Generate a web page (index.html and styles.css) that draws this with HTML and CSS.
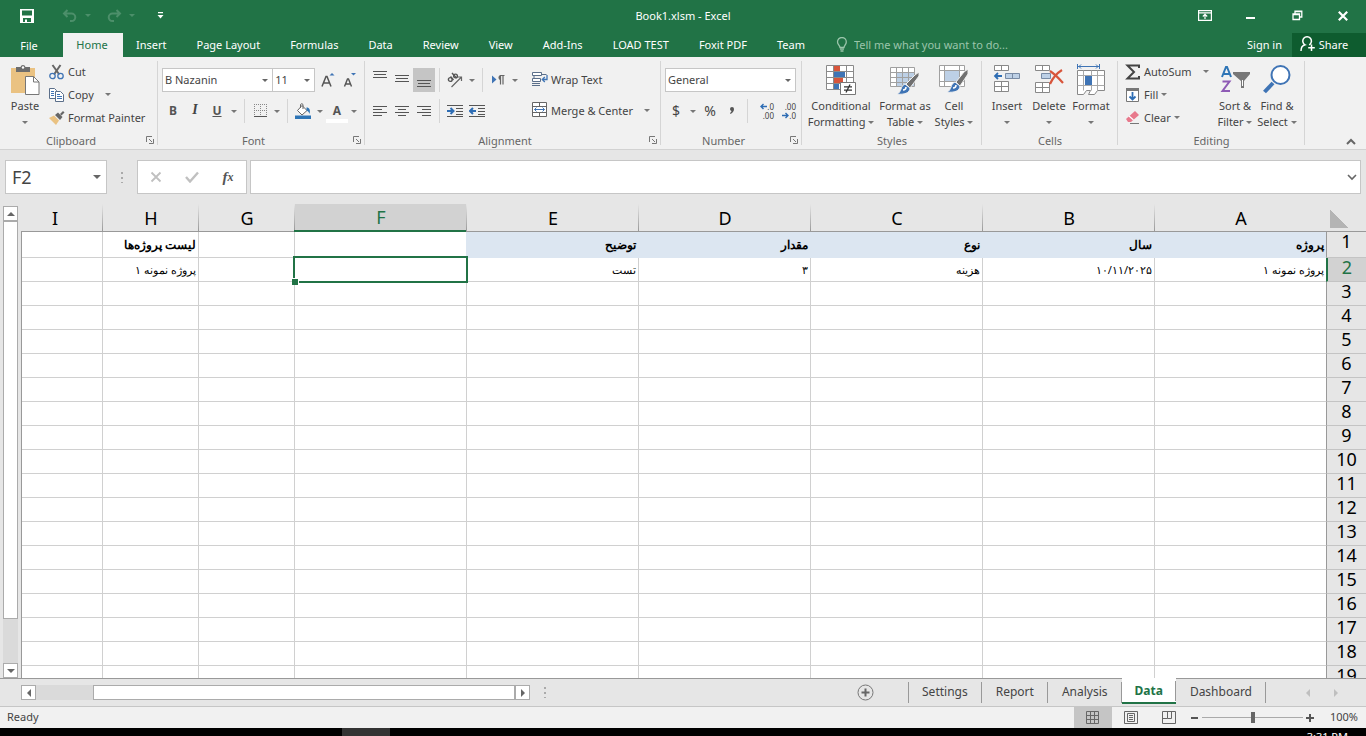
FILE: index.html
```
<!DOCTYPE html>
<html lang="en">
<head>
    <meta charset="UTF-8">
    <meta name="viewport" content="width=device-width, initial-scale=1.0">
    <title>Book1.xlsm - Excel</title>
    <link rel="stylesheet" href="styles.css">
</head>
<body>
    <header class="titlebar">
        <div class="quick-access">
            <button class="qa-save" aria-label="Save"><svg width="14" height="14" viewBox="0 0 14 14"><path d="M0 0h14v14H0z M2 1.500v5h10v-5z M3 9v4h2v-2.500h2V13h4V9z" fill="#fff" fill-rule="evenodd"/></svg></button>
            <button class="qa-undo dim" aria-label="Undo"><svg width="16" height="14" viewBox="0 0 16 14"><path d="M5.500 1L2 4.500L5.500 8M2 4.500h7.500a3.800 3.800 0 0 1 0 7.600H8" fill="none" stroke="currentColor" stroke-width="2"/></svg></button>
            <button class="caret-btn dim" aria-label="Undo list"><span class="caret"></span></button>
            <button class="qa-redo dim" aria-label="Redo"><svg width="16" height="14" viewBox="0 0 16 14"><path d="M10.500 1L14 4.500L10.500 8M14 4.500H6.500a3.800 3.800 0 0 0 0 7.600H8" fill="none" stroke="currentColor" stroke-width="2"/></svg></button>
            <button class="caret-btn dim" aria-label="Redo list"><span class="caret"></span></button>
            <button class="qa-more" aria-label="Customize Quick Access Toolbar"><svg width="7" height="7" viewBox="0 0 7 7"><path d="M1 0h5v1.300H1zM.5 3h6L3.500 6.500z" fill="#fff"/></svg></button>
        </div>
        <h1>Book1.xlsm - Excel</h1>
        <div class="window-buttons">
            <button aria-label="Ribbon Display Options"><svg width="14" height="11" viewBox="0 0 14 11"><path d="M.6.6h12.800v9.800H.6zM.6 2.800h12.800M7 9V5M4.800 6.500L7 4.400l2.200 2.100" fill="none" stroke="#fff" stroke-width="1.200"/></svg></button>
            <button aria-label="Minimize"><svg width="10" height="10"><path d="M0 6h9v2H0z" fill="#fff"/></svg></button>
            <button aria-label="Restore"><svg width="11" height="11" viewBox="0 0 11 11"><path d="M1 4h6.500v5.500H1zM1 4.500h6.500M3 4V1.200h6.800V7H7.500M3 1.500h6.800" fill="none" stroke="#fff" stroke-width="1.300"/></svg></button>
            <button aria-label="Close"><svg width="10" height="10" viewBox="0 0 10 10"><path d="M.8.8l8.400 8.400M9.200.8L.8 9.200" stroke="#fff" stroke-width="2.200"/></svg></button>
        </div>
    </header>

    <nav class="tabs">
        <button class="file-tab">File</button>
        <button class="active">Home</button>
        <button>Insert</button>
        <button>Page Layout</button>
        <button>Formulas</button>
        <button>Data</button>
        <button>Review</button>
        <button>View</button>
        <button>Add-Ins</button>
        <button>LOAD TEST</button>
        <button>Foxit PDF</button>
        <button>Team</button>
        <label class="tell-me">
            <svg width="12" height="15" viewBox="0 0 12 15"><path d="M4 10.500C4 8.500 1.500 7.500 1.500 4.900a4.400 4.400 0 0 1 8.800 0C10.300 7.500 8 8.500 8 10.500zM4 12.200h4M4.500 14h3" fill="none" stroke="#9bc5ab" stroke-width="1.300"/></svg>
            <input type="text" placeholder="Tell me what you want to do...">
        </label>
        <a href="#" class="sign-in">Sign in</a>
        <button class="share"><svg width="15" height="16" viewBox="0 0 15 16"><path d="M1 15c0-3.500 1.500-5.500 4-6.200a4.300 4.300 0 1 1 4.200 0M11.500 8.500v6.500M8.200 11.800h6.600" fill="none" stroke="#fff" stroke-width="1.500"/></svg>Share</button>
    </nav>

    <section class="ribbon">
        <div class="group clipboard">
            <div class="group-body">
                <button class="big paste">
                    <svg width="30" height="32" viewBox="0 0 30 32"><path d="M1 4h24v25H1z" fill="#eac282"/><path d="M6 3h4.500a2.600 2.600 0 0 1 5 0H20v5H6z" fill="#6d6d6d"/><circle cx="13" cy="3.500" r="1.200" fill="#fff"/><path d="M15.500 12.500h8l5.500 5.500v12.500H15.500z" fill="#fff" stroke="#777"/><path d="M23.500 12.500V18H29" fill="none" stroke="#777"/></svg>
                    <span>Paste</span><span><i class="caret"></i></span>
                </button>
                <div class="small-list">
                    <button><svg width="16" height="16" viewBox="0 0 16 16"><path d="M3.500 1l6.800 9.500M11.500 1L5 10.500" stroke="#666" stroke-width="2"/><circle cx="3.500" cy="12" r="2.700" fill="none" stroke="#3f74b5" stroke-width="1.300"/><circle cx="11.500" cy="12" r="2.700" fill="none" stroke="#3f74b5" stroke-width="1.300"/></svg>Cut</button>
                    <button><svg width="16" height="16" viewBox="0 0 16 16"><path d="M.5 1.500h5l2 2v8h-7z" fill="#fff" stroke="#5b6f8a"/><path d="M6.500 4.500h5l3 3v7h-8z" fill="#fff" stroke="#5b6f8a"/><path d="M2 4.500h3M2 6.500h3M2 8.500h3M8 7.500h3M8 9.500h5M8 11.500h5" stroke="#3f74b5"/></svg>Copy<i class="caret far"></i></button>
                    <button><svg width="16" height="16" viewBox="0 0 16 16"><path d="M0 8l5-2.500 5 5L7 15z" fill="#eac282"/><path d="M6 5l3-2.500 4.500 4.500L11 10z" fill="#666"/><path d="M11 4l3-3 1.500 1.500-3 3z" fill="#666"/></svg>Format Painter</button>
                </div>
            </div>
            <div class="group-label"><span>Clipboard</span><button class="launcher" aria-label="Clipboard settings"><svg width="8" height="8" viewBox="0 0 8 8"><path d="M.5 6V.5H6M3 3l3 3M7.500 3v4.500H3" fill="none" stroke="#777"/></svg></button></div>
        </div>

        <div class="group font">
            <div class="group-body rows">
                <div class="row">
                    <label class="combo font-name"><select aria-label="Font"><option>B Nazanin</option></select></label>
                    <label class="combo font-size"><select aria-label="Font Size"><option>11</option></select></label>
                    <button class="icon grow" aria-label="Increase Font Size"><svg width="16" height="16" viewBox="0 0 16 16"><path d="M2 14.500L6 4.500h1l4 10M3.700 11h5.600" fill="none" stroke="#555" stroke-width="1.500"/><path d="M9.500 3.500l2.500-2.500 2.500 2.500z" fill="#3f74b5"/></svg></button>
                    <button class="icon" aria-label="Decrease Font Size"><svg width="16" height="16" viewBox="0 0 16 16"><path d="M2.500 14.500L5.500 7h1l3 7.500M3.800 12h4.400" fill="none" stroke="#555" stroke-width="1.400"/><path d="M9 1h5l-2.500 2.500z" fill="#3f74b5"/></svg></button>
                </div>
                <div class="row">
                    <button class="icon bold">B</button>
                    <button class="icon italic">I</button>
                    <button class="icon underline">U</button>
                    <button class="caret-btn" aria-label="Underline style"><i class="caret"></i></button>
                    <span class="sep"></span>
                    <button class="icon" aria-label="Borders"><svg width="13" height="14" viewBox="0 0 13 14"><path d="M.5 0v13M6.500 0v13M12.500 0v13M0 .5h13M0 6.500h13" stroke="#888" stroke-dasharray="1 1"/><path d="M0 12.500h13" stroke="#555"/></svg></button>
                    <button class="caret-btn" aria-label="Border style"><i class="caret"></i></button>
                    <span class="sep"></span>
                    <button class="icon" aria-label="Fill Color"><svg width="16" height="16" viewBox="0 0 16 16"><path d="M7 2.500l5 5L7 12 2.500 7.500z" fill="#fff" stroke="#666"/><path d="M5.500 5V1.500q1.500-1.800 2.500 0V6" fill="none" stroke="#666"/><path d="M11.500 4.500c3 0 4 2.500 3 6.500-.5-2-1.500-3-3-3.500z" fill="#2e75b6"/><path d="M0 12.500h16V16H0z" fill="#2e75b6"/></svg></button>
                    <button class="caret-btn" aria-label="Fill palette"><i class="caret"></i></button>
                    <button class="icon font-color">A</button>
                    <button class="caret-btn" aria-label="Font palette"><i class="caret"></i></button>
                </div>
            </div>
            <div class="group-label"><span>Font</span><button class="launcher" aria-label="Font settings"><svg width="8" height="8" viewBox="0 0 8 8"><path d="M.5 6V.5H6M3 3l3 3M7.500 3v4.500H3" fill="none" stroke="#777"/></svg></button></div>
        </div>

        <div class="group alignment">
            <div class="group-body">
                <div class="rows align-left">
                    <div class="row">
                        <button class="icon" aria-label="Top Align"><svg width="14" height="20"><path d="M0 1.500h14M1 4.500h12M0 7.500h14" stroke="#555"/></svg></button>
                        <button class="icon" aria-label="Middle Align"><svg width="14" height="20"><path d="M0 5.500h14M1 8.500h12M0 11.500h14" stroke="#555"/></svg></button>
                        <button class="icon pressed" aria-label="Bottom Align"><svg width="14" height="20"><path d="M0 10.500h14M1 13.500h12M0 16.500h14" stroke="#555"/></svg></button>
                        <span class="sep"></span>
                        <button class="icon" aria-label="Orientation"><svg width="16" height="16" viewBox="0 0 16 16"><path d="M4.500 15L14 5.500M10.500 5H14.500V9" fill="none" stroke="#666" stroke-width="1.200"/><g fill="none" stroke="#555" stroke-width="1.400"><circle cx="3.300" cy="7.500" r="1.900"/><path d="M3.500 4.500l3 3.500M5 1l4.500 5"/><circle cx="8.500" cy="4" r="1.900"/></g></svg></button>
                        <button class="caret-btn" aria-label="Orientation list"><i class="caret"></i></button>
                        <span class="sep"></span>
                        <button class="icon" aria-label="Text Direction"><svg width="13" height="12" viewBox="0 0 13 12"><path d="M0 1.500l4.500 4L0 9.500z" fill="#3f74b5"/><path d="M8.500 1.500v9M11 1.500v9M12.500 1.500H8" stroke="#666" fill="none" stroke-width="1.200"/><path d="M9 1a2.500 2.500 0 0 0 0 5z" fill="#666"/></svg></button>
                        <button class="caret-btn" aria-label="Direction list"><i class="caret"></i></button>
                    </div>
                    <div class="row">
                        <button class="icon" aria-label="Align Left"><svg width="14" height="12"><path d="M0 1.500h14M0 4.500h9M0 7.500h14M0 10.500h9" stroke="#555"/></svg></button>
                        <button class="icon" aria-label="Center"><svg width="14" height="12"><path d="M0 1.500h14M3 4.500h8M0 7.500h14M3 10.500h8" stroke="#555"/></svg></button>
                        <button class="icon" aria-label="Align Right"><svg width="14" height="12"><path d="M0 1.500h14M5 4.500h9M0 7.500h14M5 10.500h9" stroke="#555"/></svg></button>
                        <span class="sep"></span>
                        <button class="icon" aria-label="Decrease Indent"><svg width="16" height="14"><path d="M0 1.500h16M9 4.500h7M9 7.500h7M9 10.500h7M0 12.500h16" stroke="#555"/><path d="M0 7h5M3.500 4L6.500 7l-3 3" fill="none" stroke="#2e6db4" stroke-width="2"/></svg></button>
                        <button class="icon" aria-label="Increase Indent"><svg width="16" height="14"><path d="M0 1.500h16M9 4.500h7M9 7.500h7M9 10.500h7M0 12.500h16" stroke="#555"/><path d="M2 7h5M4 4L1 7l3 3" fill="none" stroke="#2e6db4" stroke-width="2"/></svg></button>
                    </div>
                </div>
                <div class="rows align-right">
                    <button class="text-btn"><svg width="16" height="16" viewBox="0 0 16 16"><path d="M.5 1.500h9v3h-9zM.5 7.500h8v3h-8z" fill="#fff" stroke="#5b6f8a"/><path d="M2 5v2M0 12.500h8M0 14.500h8M10 3.500h4.500" stroke="#5b6f8a"/><path d="M15 4v4.500h-4M12.800 6l-2.500 2.500L12.800 11" fill="none" stroke="#3f74b5" stroke-width="1.300"/></svg>Wrap Text</button>
                    <button class="text-btn"><svg width="16" height="16" viewBox="0 0 16 16"><path d="M.5.5h14v14H.5zM.5 4.500h14M.5 10.500h14M7.500.5v4M7.500 10.500v4" fill="#fff" stroke="#666"/><path d="M2.500 7.500h10M4.500 5.500l-2 2 2 2M10.500 5.500l2 2-2 2" fill="none" stroke="#3f74b5"/></svg>Merge &amp; Center<i class="caret far"></i></button>
                </div>
            </div>
            <div class="group-label"><span>Alignment</span><button class="launcher" aria-label="Alignment settings"><svg width="8" height="8" viewBox="0 0 8 8"><path d="M.5 6V.5H6M3 3l3 3M7.500 3v4.500H3" fill="none" stroke="#777"/></svg></button></div>
        </div>

        <div class="group number">
            <div class="group-body rows">
                <div class="row">
                    <label class="combo number-format"><select aria-label="Number Format"><option>General</option></select></label>
                </div>
                <div class="row">
                    <button class="icon symbol">$</button>
                    <button class="caret-btn" aria-label="Currency list"><i class="caret"></i></button>
                    <button class="icon symbol">%</button>
                    <button class="icon comma" aria-label="Comma Style"><svg width="6" height="10"><path d="M1 3a2 2 0 1 1 4 0q0 3-3.500 5l-.5-1q1.500-1 1.500-2Q1 4.500 1 3z" fill="#555"/></svg></button>
                    <span class="sep"></span>
                    <button class="icon decimals" aria-label="Increase Decimal"><span><svg width="7" height="7"><path d="M1 3.500h6M3.500 1L1 3.500 3.500 6" fill="none" stroke="#2e6db4" stroke-width="1.400"/></svg>.0</span><span>.00</span></button>
                    <button class="icon decimals" aria-label="Decrease Decimal"><span>.00</span><span><svg width="7" height="7"><path d="M0 3.500h6M3.500 1L6 3.500 3.500 6" fill="none" stroke="#2e6db4" stroke-width="1.400"/></svg>.0</span></button>
                </div>
            </div>
            <div class="group-label"><span>Number</span><button class="launcher" aria-label="Number settings"><svg width="8" height="8" viewBox="0 0 8 8"><path d="M.5 6V.5H6M3 3l3 3M7.500 3v4.500H3" fill="none" stroke="#777"/></svg></button></div>
        </div>

        <div class="group styles">
            <div class="group-body">
                <button class="big conditional">
                    <svg width="32" height="32" viewBox="0 0 32 32"><path d="M1.500 1.500h27v24h-27z" fill="#fff"/><path d="M9 2h6v5H9zM9 14h9v5H9z" fill="#d8553b"/><path d="M9 8h11v5H9zM9 20h5v5H9z" fill="#3f74b5"/><path d="M1.500 1.500h27v24h-27zM8.500 1.500v24M21.500 1.500v24M1.500 7.500h27M1.500 13.500h27M1.500 19.500h27" fill="none" stroke="#8a8a8a"/><path d="M15.500 18.500h15v12h-15z" fill="#fff" stroke="#777"/><path d="M19 22.800h8M19 26.200h8M25 20.500l-4 8" stroke="#333" stroke-width="1.300"/></svg>
                    <span>Conditional</span><span>Formatting <i class="caret"></i></span>
                </button>
                <button class="big format-as">
                    <svg width="32" height="32" viewBox="0 0 32 32"><path d="M1.500 3.500h24v19h-24z" fill="#fff"/><path d="M8 8h17v15H8z" fill="#bdd0e6"/><path d="M1.500 3.500h24v19h-24zM7.500 3.500v19M13.500 3.500v19M19.500 3.500v19M1.500 8.500h24M1.500 13.500h24M1.500 18.500h24" fill="none" stroke="#a0a0a0"/><path d="M30 8v4l-9 12-4-4 9-9z" fill="#707070" stroke="#f1f1f1"/><path d="M16 20l5 4c0 5-6 7-13 6 5-2 3-8 8-10z" fill="#3f74b5" stroke="#f1f1f1"/><path d="M14 26q3 0 3-3" fill="none" stroke="#fff" stroke-width="1.500"/></svg>
                    <span>Format as</span><span>Table <i class="caret"></i></span>
                </button>
                <button class="big cell-styles">
                    <svg width="32" height="32" viewBox="0 0 32 32"><path d="M1.500 1.500h25v21h-25z" fill="#fff"/><path d="M7 6h15v11H7z" fill="#bdd0e6"/><path d="M1.500 1.500h25v21h-25zM6.500 1.500v21M21.500 1.500v21M1.500 6.500h25M1.500 17.500h25" fill="none" stroke="#a0a0a0"/><path d="M30 5v5l-8 12-4-4 8-10z" fill="#707070" stroke="#f1f1f1"/><path d="M17 18l5 4c0 5-6 7-13 6 5-2 3-8 8-10z" fill="#3f74b5" stroke="#f1f1f1"/><path d="M15 24q3 0 3-3" fill="none" stroke="#fff" stroke-width="1.500"/></svg>
                    <span>Cell</span><span>Styles <i class="caret"></i></span>
                </button>
            </div>
            <div class="group-label"><span>Styles</span></div>
        </div>

        <div class="group cells">
            <div class="group-body">
                <button class="big">
                    <svg width="28" height="32" viewBox="0 0 28 32"><path d="M1.500 1.500h14v5h-14zM8.500 1.500v5M1.500 17.500h14v10h-14zM8.500 17.500v10M1.500 22.500h14" fill="#fff" stroke="#888"/><path d="M12.500 9.500h14v5h-14zM19.500 9.500v5" fill="#bdd0e6" stroke="#788ba5"/><path d="M2 12h7M5 9l-3 3 3 3" fill="none" stroke="#2e6db4" stroke-width="1.800"/></svg>
                    <span>Insert</span><span><i class="caret"></i></span>
                </button>
                <button class="big">
                    <svg width="30" height="32" viewBox="0 0 30 32"><path d="M1.500 1.500h14v5h-14zM8.500 1.500v5M1.500 18.500h14v10h-14zM8.500 18.500v10M1.500 23.500h14" fill="#fff" stroke="#888"/><path d="M7.500 9.500h9v5h-9z" fill="#bdd0e6" stroke="#788ba5"/><path d="M16 7q6 4 13 12M28 6q-8 5-12 14" fill="none" stroke="#d8553b" stroke-width="2.200"/></svg>
                    <span>Delete</span><span><i class="caret"></i></span>
                </button>
                <button class="big format">
                    <svg width="30" height="32" viewBox="0 0 30 32"><path d="M1.500 6.500h27v20h-7l-3 4h-6l2-4h-4l-3 4h-6z" fill="#fff" stroke="#888"/><path d="M7.500 6.500v20M1.500 11.500h27M1.500 21.500h27M15.500 6.500v20M21.500 6.500v20" stroke="#aaa"/><path d="M9 12h7v9H9z" fill="#3f74b5"/><path d="M1.500 0v5M23.500 0v5M2 2.500h21M5 .5l-2 2 2 2M20 .5l2 2-2 2" fill="none" stroke="#3f74b5"/></svg>
                    <span>Format</span><span><i class="caret"></i></span>
                </button>
            </div>
            <div class="group-label"><span>Cells</span></div>
        </div>

        <div class="group editing">
            <div class="group-body">
                <div class="small-list">
                    <button><svg width="16" height="16" viewBox="0 0 16 16"><path d="M14 4V1.500H2.500L9 8l-6.500 6.500H14V12" fill="none" stroke="#444" stroke-width="2"/></svg>AutoSum<i class="caret far"></i></button>
                    <button><svg width="16" height="16" viewBox="0 0 16 16"><path d="M1.500 1.500h12v13h-12z" fill="#fff" stroke="#777"/><path d="M1 1h13v3H1z" fill="#777"/><path d="M7.500 5v7M4.500 9.500l3 3 3-3" fill="none" stroke="#2e6db4" stroke-width="1.800"/></svg>Fill<i class="caret"></i></button>
                    <button><svg width="16" height="16" viewBox="0 0 16 16"><path d="M10 1l4 4-8 7H3L1 9z" fill="#e8798c"/><path d="M4 6l4.500 4" stroke="#fff" stroke-width="1.200"/><path d="M5 13.500h9" stroke="#777"/></svg>Clear<i class="caret"></i></button>
                </div>
                <button class="big">
                    <svg width="30" height="32" viewBox="0 0 30 32"><path d="M2 13L6 3h1l4 10M3.500 10h6" fill="none" stroke="#2e75b6" stroke-width="2"/><path d="M2.500 17.500h7L2.500 27h7.500" fill="none" stroke="#8e5bb5" stroke-width="2"/><path d="M13 8h17v2l-6 7v7h-3v-7l-8-7z" fill="#777"/><path d="M22.500 16v6" stroke="#fff"/></svg>
                    <span>Sort &amp;</span><span>Filter <i class="caret"></i></span>
                </button>
                <button class="big">
                    <svg width="30" height="32" viewBox="0 0 30 32"><path d="M2.500 28L11 19" stroke="#3f74b5" stroke-width="4"/><circle cx="18.500" cy="11" r="9" fill="#fff" stroke="#3f74b5" stroke-width="2"/></svg>
                    <span>Find &amp;</span><span>Select <i class="caret"></i></span>
                </button>
            </div>
            <div class="group-label"><span>Editing</span></div>
        </div>

        <button class="collapse" aria-label="Collapse the Ribbon"><svg width="10" height="7"><path d="M1 6l4-4 4 4" fill="none" stroke="#666" stroke-width="2"/></svg></button>
    </section>

    <section class="formula-bar">
        <label class="combo name-box"><input type="text" value="F2" aria-label="Name Box"></label>
        <span class="dots"></span>
        <div class="fx-buttons">
            <button aria-label="Cancel"><svg width="12" height="12"><path d="M1.500 1.500l9 9M10.500 1.500l-9 9" stroke="#c0c0c0" stroke-width="1.800"/></svg></button>
            <button aria-label="Enter"><svg width="14" height="12"><path d="M1 6l4 4.500L13 1.500" fill="none" stroke="#c0c0c0" stroke-width="2.400"/></svg></button>
            <button class="fx" aria-label="Insert Function">f<sub>x</sub></button>
        </div>
        <div class="formula">
            <input type="text" aria-label="Formula Bar">
            <button aria-label="Expand Formula Bar"><svg width="10" height="7"><path d="M1 1l4 4 4-4" fill="none" stroke="#666" stroke-width="1.600"/></svg></button>
        </div>
    </section>

    <main class="workspace">
        <div class="v-scroll">
            <button aria-label="Scroll up"><i class="arrow up"></i></button>
            <div class="v-track"><div class="thumb"></div></div>
            <button aria-label="Scroll down"><i class="arrow down"></i></button>
        </div>
        <div class="sheet" dir="rtl">
            <table lang="fa">
                <colgroup>
                    <col class="col-head">
                    <col class="col-wide" span="6">
                    <col class="col-mid" span="2">
                    <col>
                </colgroup>
                <thead>
                    <tr>
                        <th class="corner"></th>
                        <th>A</th><th>B</th><th>C</th><th>D</th><th>E</th><th class="selected">F</th><th>G</th><th>H</th><th>I</th>
                    </tr>
                </thead>
                <tbody id="rows">
                    <tr class="titles">
                        <th>1</th>
                        <td class="filled">پروژه</td><td class="filled">سال</td><td class="filled">نوع</td><td class="filled">مقدار</td><td class="filled">توضیح</td><td></td><td></td><td>لیست پروژه‌ها</td><td></td>
                    </tr>
                    <tr>
                        <th class="selected">2</th>
                        <td>پروژه نمونه ۱</td><td>۱۰/۱۱/۲۰۲۵</td><td>هزینه</td><td>۳</td><td>تست</td><td class="current"></td><td></td><td>پروژه نمونه ۱</td><td></td>
                    </tr>
                </tbody>
            </table>
        </div>
    </main>

    <footer class="sheet-bar">
        <div class="h-scroll">
            <button aria-label="Scroll left"><i class="arrow left"></i></button>
            <div class="h-track"><div class="thumb"></div></div>
            <button aria-label="Scroll right"><i class="arrow right"></i></button>
        </div>
        <span class="dots"></span>
        <button class="new-sheet" aria-label="New sheet"><svg width="17" height="17"><circle cx="8.500" cy="8.500" r="7.500" fill="none" stroke="#777"/><path d="M4.500 8.500h8M8.500 4.500v8" stroke="#666" stroke-width="2"/></svg></button>
        <div class="sheet-tabs">
            <button>Settings</button>
            <button>Report</button>
            <button>Analysis</button>
            <button class="active">Data</button>
            <button>Dashboard</button>
        </div>
        <div class="sheet-nav">
            <button aria-label="Previous sheets"><i class="arrow left"></i></button>
            <button aria-label="Next sheets"><i class="arrow right"></i></button>
        </div>
    </footer>

    <div class="status-bar">
        <span class="status">Ready</span>
        <button class="view pressed" aria-label="Normal"><svg width="14" height="13"><path d="M.5.5h12v12H.5zM4.500.5v12M8.500.5v12M.5 4.500h12M.5 8.500h12" fill="none" stroke="#666"/></svg></button>
        <button class="view" aria-label="Page Layout"><svg width="14" height="13"><path d="M.5.5h13v12H.5zM3.500 2.500h7v8h-7zM5 4.500h4M5 6.500h4M5 8.500h4" fill="none" stroke="#666"/></svg></button>
        <button class="view" aria-label="Page Break Preview"><svg width="14" height="13"><path d="M.5.5h13v12H.5zM5.500.5v7h-5M5.500 7.500h4V.5" fill="none" stroke="#666"/></svg></button>
        <button class="zoom-btn" aria-label="Zoom Out"><svg width="8" height="8"><path d="M0 3h7v2H0z" fill="#555"/></svg></button>
        <input type="range" min="0" max="200" value="100" aria-label="Zoom">
        <button class="zoom-btn" aria-label="Zoom In"><svg width="8" height="8"><path d="M0 3h8v2H0zM3 0h2v8H3z" fill="#555"/></svg></button>
        <span class="zoom-value">100%</span>
    </div>

    <div class="taskbar">
        <span class="task"></span>
        <time class="clock">3:31 PM</time>
    </div>

    <script>
        // empty rows below the data
        const rows = document.getElementById('rows');
        for (let n = 3; n <= 19; n++) {
            const tr = rows.insertRow();
            const th = document.createElement('th');
            th.textContent = n;
            tr.appendChild(th);
            for (let c = 0; c < 9; c++) tr.insertCell();
        }
    </script>
</body>
</html>
```
FILE: styles.css
```
* {
    box-sizing: border-box;
}
body {
    margin: 0;
    height: 100vh;
    display: flex;
    flex-direction: column;
    overflow: hidden;
    background: #e6e6e6;
    color: #444;
    font: 11px "Noto Sans", sans-serif;
}
button, input, select {
    font: inherit;
    color: inherit;
    border: 0;
    margin: 0;
    padding: 0;
    background: none;
    border-radius: 0;
    outline: none;
}
button {
    display: flex;
    align-items: center;
    justify-content: center;
    white-space: nowrap;
    flex-shrink: 0;
}
svg {
    display: block;
    flex-shrink: 0;
}

/* small triangles */
.caret {
    display: inline-block;
    border: 3px solid transparent;
    border-top-color: #777;
    border-bottom: 0;
    vertical-align: 2px;
}
.caret.far {
    margin-left: 8px;
}
.arrow {
    border: 4px solid transparent;
}
.arrow.up {
    border-top: 0;
    border-bottom-color: #666;
}
.arrow.down {
    border-bottom: 0;
    border-top-color: #666;
}
.arrow.left {
    border-left: 0;
    border-right-color: #666;
}
.arrow.right {
    border-right: 0;
    border-left-color: #666;
}

/* title bar */
.titlebar {
    display: grid;
    grid-template-columns: 1fr auto 1fr;
    align-items: center;
    height: 33px;
    flex-shrink: 0;
    padding-bottom: 2px;
    background: #217346;
    color: #fff;
}
.titlebar h1 {
    margin: 0;
    font-size: 11px;
    font-weight: normal;
}
.quick-access {
    display: flex;
    align-items: center;
    padding-left: 20px;
}
.dim {
    color: #4c8f6a;
}
.dim .caret {
    border-top-color: #4c8f6a;
}
.qa-undo {
    margin-left: 28px;
}
.qa-redo {
    margin-left: 8px;
}
.qa-more {
    margin-left: 15px;
}
.window-buttons {
    display: flex;
    justify-content: flex-end;
}
.window-buttons button {
    width: 46px;
    height: 31px;
}

/* ribbon tabs */
.tabs {
    display: flex;
    height: 24px;
    flex-shrink: 0;
    background: #217346;
    color: #fff;
}
.tabs button {
    padding: 0 15px 2px;
}
.tabs .file-tab {
    width: 63px;
    padding: 0 5px 0 0;
}
.tabs .active {
    width: 58px;
    padding: 0 0 2px;
    background: #f1f1f1;
    color: #217346;
    box-shadow: 2px 0 #f1f1f1;
}
.tell-me {
    display: flex;
    flex: 1;
    align-items: center;
    gap: 6px;
    padding: 0 0 2px 16px;
}
.tell-me input {
    flex: 1;
    min-width: 0;
}
.tell-me input::placeholder {
    color: #9bc5ab;
    opacity: 1;
}
.sign-in {
    align-self: center;
    padding: 0 10px 2px;
    color: #fff;
    text-decoration: none;
}
.tabs .share {
    width: 74px;
    gap: 4px;
    padding: 0 10px 2px 0;
    background: #0e5c2f;
}

/* ribbon */
.ribbon {
    display: flex;
    height: 93px;
    flex-shrink: 0;
    background: #f1f1f1;
    border-bottom: 1px solid #d2d2d2;
}
.group {
    position: relative;
    display: flex;
    flex-direction: column;
    flex-shrink: 0;
}
.group::after {
    content: "";
    position: absolute;
    top: 4px;
    right: 0;
    bottom: 4px;
    width: 1px;
    background: #d5d5d5;
}
.clipboard {
    width: 158px;
}
.font {
    width: 207px;
}
.alignment {
    width: 296px;
}
.number {
    width: 141px;
}
.styles {
    width: 180px;
}
.cells {
    width: 136px;
}
.editing {
    width: 187px;
}
.group-body {
    display: flex;
    height: 76px;
    padding: 0 4px;
}
.styles .group-body {
    padding: 0 3px;
}
.group-label {
    display: flex;
    align-items: center;
    height: 16px;
    padding-bottom: 2px;
    color: #666;
}
.group-label span {
    flex: 1;
    text-align: center;
}
.launcher {
    width: 16px;
    height: 14px;
}
.group-body.rows, .rows {
    display: flex;
    flex-direction: column;
    gap: 7px;
    padding-top: 11px;
}
.row {
    display: flex;
    height: 24px;
}
.icon {
    width: 22px;
    height: 24px;
}
.caret-btn {
    width: 12px;
}
.quick-access .caret-btn {
    width: 20px;
}
.pressed {
    background: #c5c5c5;
}
.sep {
    width: 1px;
    margin: 0 4px;
    background: #d5d5d5;
}
.bold, .underline, .font-color {
    padding-bottom: 2px;
    font-size: 12px;
    font-weight: bold;
    color: #555;
}
.italic {
    padding-bottom: 2px;
    font: italic bold 14px "Liberation Serif", serif;
}
.underline {
    text-decoration: underline;
}
.font-color {
    box-shadow: inset 0 -4px #fff;
}
.symbol {
    padding-bottom: 2px;
    font-size: 14px;
}
.decimals {
    flex-direction: column;
    align-items: flex-end;
    font-size: 8px;
    line-height: 9px;
}
.decimals span {
    display: flex;
    align-items: center;
}

/* combo boxes */
.combo {
    position: relative;
    display: flex;
    background: #fff;
    border: 1px solid #c6c6c6;
}
.combo::after {
    content: "";
    position: absolute;
    top: 10px;
    right: 4px;
    border: 3px solid transparent;
    border-top-color: #666;
    border-bottom: 0;
}
.combo select, .combo input {
    flex: 1;
    min-width: 0;
    padding: 0 2px 2px;
    appearance: none;
}
.font-name {
    width: 112px;
}
.font-size {
    width: 43px;
    margin-left: -1px;
}
.grow {
    margin-left: 2px;
}
.number-format {
    width: 131px;
}

/* large buttons with a two line caption */
.big {
    flex-direction: column;
    justify-content: flex-start;
    width: 42px;
    padding-top: 7px;
    line-height: 16px;
}
.big svg {
    margin-bottom: 2px;
}
.paste {
    margin-right: 3px;
}
.conditional {
    width: 72px;
}
.format-as {
    width: 56px;
}
.small-list {
    display: flex;
    flex-direction: column;
    padding-top: 3px;
}
.small-list button {
    justify-content: flex-start;
    gap: 3px;
    height: 23px;
}
.editing .small-list {
    width: 92px;
    padding-left: 3px;
}
.align-left {
    width: 156px;
}
.align-right {
    align-items: flex-start;
    padding-left: 7px;
}
.text-btn {
    height: 24px;
    gap: 3px;
    padding-bottom: 2px;
}
.collapse {
    width: 30px;
    height: 16px;
    margin: auto 0 0 auto;
}

/* formula bar */
.formula-bar {
    display: flex;
    height: 54px;
    flex-shrink: 0;
    padding: 10px 5px;
}
.name-box {
    width: 102px;
    font-size: 18px;
}
.name-box::after {
    top: 14px;
    right: 5px;
    border-width: 4px;
    border-bottom: 0;
}
.name-box input {
    padding: 0 6px;
}
.dots {
    width: 2px;
    height: 11px;
    margin: auto 14px;
    background: repeating-linear-gradient(#aaa 0 2px, transparent 2px 5px);
}
.fx-buttons {
    display: flex;
    width: 110px;
    background: #fff;
    border: 1px solid #c6c6c6;
}
.fx-buttons button {
    flex: 1;
}
.fx-buttons .fx {
    font: italic bold 15px "Liberation Serif", serif;
    color: #555;
}
.fx sub {
    font-size: 12px;
    vertical-align: -1px;
}
.formula {
    display: flex;
    flex: 1;
    margin-left: 3px;
    background: #fff;
    border: 1px solid #c6c6c6;
}
.formula input {
    flex: 1;
    padding: 0 6px;
    font-size: 18px;
}
.formula button {
    width: 16px;
}

/* grid */
.workspace {
    display: flex;
    flex: 1;
    min-height: 0;
}
.v-scroll {
    display: flex;
    flex-direction: column;
    width: 15px;
    margin: 2px 3px 0;
}
.v-scroll button, .h-scroll button {
    width: 15px;
    height: 15px;
    background: #fff;
    border: 1px solid #ababab;
}
.v-track {
    flex: 1;
    background: #dadada;
}
.thumb {
    background: #fff;
    border: 1px solid #ababab;
}
.v-track .thumb {
    height: 90%;
}
.sheet {
    position: relative;
    flex: 1;
    min-width: 0;
    overflow: hidden;
}
/* left edge of the cells, below the column letters */
.sheet::before {
    content: "";
    position: absolute;
    top: 27px;
    bottom: 0;
    left: 0;
    width: 1px;
    background: #999;
    z-index: 1;
}
table {
    width: 100%;
    min-width: 1360px;
    table-layout: fixed;
    border-spacing: 0;
    color: #000;
}
.col-head {
    width: 40px;
}
.col-wide {
    width: 172px;
}
.col-mid {
    width: 96px;
}
th, td {
    height: 24px;
    padding: 0;
    line-height: 20px;
    overflow: hidden;
    white-space: nowrap;
}
td {
    padding: 0 2px;
    background: #fff;
    border-left: 1px solid #d0d0d0;
    border-bottom: 1px solid #d0d0d0;
    font-size: 11px;
    text-align: right;
}
th {
    font-size: 18px;
    font-weight: normal;
}
thead th {
    height: 28px;
    padding-left: 2px;
    border-bottom: 1px solid #999;
    background: linear-gradient(#e6e6e6, #999) left / 1px 100% no-repeat;
}
thead .selected {
    background-color: #d2d2d2;
    border-bottom: 2px solid #217346;
    color: #217346;
}
thead .corner {
    background: linear-gradient(to top right, #b4b4b4 50%, transparent 50%) 4px 5px / 19px 19px no-repeat;
}
tbody th {
    border-left: 1px solid #999;
    border-bottom: 1px solid #c4c4c4;
    line-height: 18px;
    vertical-align: top;
}
tbody th.selected {
    background: #d2d2d2;
    border-left: 2px solid #217346;
    color: #217346;
}
.titles td {
    height: 26px;
    font-size: 12px;
    font-weight: bold;
}
.titles td.filled {
    background: #dce6f1;
    border-color: #dce6f1;
}
.current {
    position: relative;
    overflow: visible;
}
.current::before {
    content: "";
    position: absolute;
    inset: -2px;
    border: 2px solid #217346;
}
.current::after {
    content: "";
    position: absolute;
    left: -3px;
    bottom: -4px;
    width: 6px;
    height: 6px;
    background: #217346;
    border: 1px solid #fff;
    border-width: 1px 1px 0 0;
}

/* sheet tabs and horizontal scroll */
.sheet-bar {
    display: flex;
    height: 28px;
    flex-shrink: 0;
    padding-left: 21px;
    border-top: 1px solid #999;
}
.h-scroll {
    display: flex;
    flex: 0 1 509px;
    margin-top: 6px;
}
.h-track {
    display: flex;
    justify-content: flex-end;
    flex: 1;
    height: 15px;
    background: #dadada;
}
.h-track .thumb {
    width: 88%;
}
.new-sheet {
    margin-left: auto;
}
.sheet-tabs {
    display: flex;
    margin: 0 40px 0 34px;
    font-size: 12px;
}
.sheet-tabs button {
    position: relative;
    height: 25px;
    padding: 0 14px;
}
/* divider on the right of every tab, plus one before the first */
.sheet-tabs button::after, .sheet-tabs button:first-child::before {
    content: "";
    position: absolute;
    top: 3px;
    right: 0;
    bottom: 1px;
    width: 1px;
    background: #999;
}
.sheet-tabs button:first-child::before {
    right: auto;
    left: 0;
}
.sheet-tabs .active {
    margin-top: -1px;
    height: 26px;
    padding: 0 13px;
    background: #fff;
    border-bottom: 2px solid #217346;
    color: #217346;
    font-weight: bold;
}
.sheet-nav {
    display: flex;
    gap: 24px;
    margin-right: 28px;
    opacity: 0.3;
}

/* status bar */
.status-bar {
    display: flex;
    align-items: center;
    height: 22px;
    flex-shrink: 0;
    background: #f1f1f1;
    border-top: 1px solid #c6c6c6;
}
.status {
    flex: 1;
    padding: 0 0 2px 7px;
}
.view {
    width: 38px;
    height: 21px;
}
.zoom-btn {
    width: 14px;
    height: 21px;
}
.status-bar input {
    width: 101px;
    height: 11px;
    appearance: none;
    background: linear-gradient(#aaa, #aaa) center / 100% 1px no-repeat;
}
.status-bar input::-webkit-slider-thumb {
    appearance: none;
    width: 4px;
    height: 11px;
    background: #666;
}
.zoom-value {
    width: 49px;
    padding: 0 8px 2px 0;
    text-align: right;
}

/* top edge of the desktop taskbar */
.taskbar {
    display: flex;
    justify-content: space-between;
    height: 8px;
    flex-shrink: 0;
    padding: 0 18px 0 342px;
    background: #000;
    color: #fff;
    overflow: hidden;
}
.task {
    width: 48px;
    background: #333;
}
.clock {
    padding-top: 3px;
    line-height: 12px;
}
```
